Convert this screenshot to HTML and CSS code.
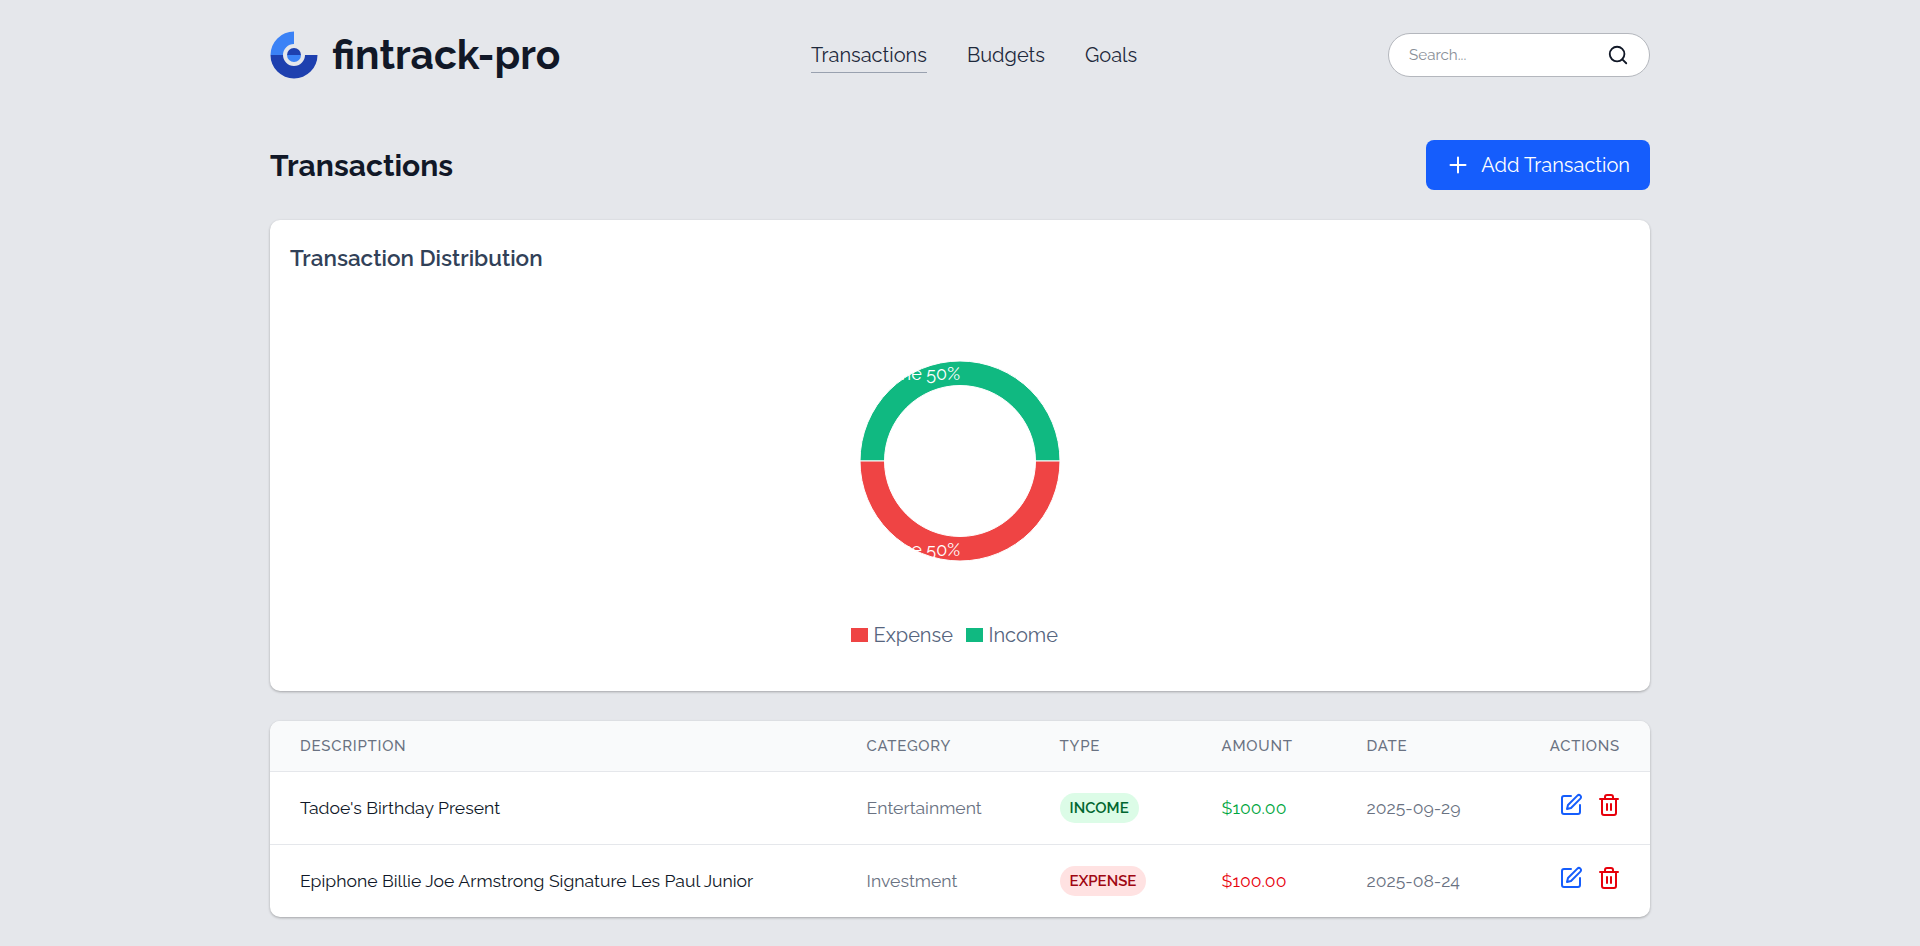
FILE: index.html
```html
<!DOCTYPE html>
<html lang="en">
<head>
    <meta charset="UTF-8">
    <meta name="viewport" content="width=device-width, initial-scale=1.0">
    <title>fintrack-pro</title>
    <link rel="stylesheet" href="styles.css">
</head>
<body>
    <div class="container">
        <header class="topbar">
            <a class="brand" href="#">
                <svg class="brand-logo" viewBox="0 0 48 48" width="48" height="48">
                    <path d="M24 .5A23.500 23.500 0 0 0 .5 24H13A11 11 0 0 1 24 13Z" fill="#3b82f6"/>
                    <path d="M.5 24A23.500 23.500 0 0 0 47.500 24H35A11 11 0 0 1 13 24Z" fill="#1e40af"/>
                    <path d="M17 24A7 7 0 0 1 31 24Z" fill="#1e40af"/>
                    <path d="M17 24A7 7 0 0 0 31 24Z" fill="#3b82f6"/>
                </svg>
                <span class="brand-name">fintrack-pro</span>
            </a>
            <nav class="nav">
                <a class="nav-link active" href="#">Transactions</a>
                <a class="nav-link" href="#">Budgets</a>
                <a class="nav-link" href="#">Goals</a>
            </nav>
            <div class="search">
                <span class="search-hint">Search...</span>
                <svg class="search-icon" viewBox="0 0 24 24" width="22" height="22" fill="none" stroke="#111827" stroke-width="2" stroke-linecap="round">
                    <circle cx="11" cy="11" r="8"/>
                    <path d="M21 21l-4.300-4.300"/>
                </svg>
            </div>
        </header>

        <div class="page-head">
            <h1>Transactions</h1>
            <button class="add-btn" type="button">
                <svg viewBox="0 0 24 24" width="24" height="24" fill="none" stroke="#fff" stroke-width="2" stroke-linecap="round">
                    <path d="M12 4.500v15M4.500 12h15"/>
                </svg>
                Add Transaction
            </button>
        </div>

        <section class="card chart-card">
            <h2>Transaction Distribution</h2>
            <div class="donut-wrap">
                <svg class="donut" viewBox="0 0 200 200" width="200" height="200">
                    <path d="M0 100A100 100 0 0 1 200 100H175.500A75.500 75.500 0 0 0 24.500 100Z" fill="#10b981" stroke="#fff"/>
                    <path d="M0 100A100 100 0 0 0 200 100H175.500A75.500 75.500 0 0 1 24.500 100Z" fill="#ef4444" stroke="#fff"/>
                    <text class="donut-label" x="100" y="19" text-anchor="end">Income 50%</text>
                    <text class="donut-label" x="100" y="195" text-anchor="end">Expense 50%</text>
                </svg>
            </div>
            <div class="legend">
                <span class="legend-item"><i class="swatch swatch-red"></i>Expense</span>
                <span class="legend-item"><i class="swatch swatch-green"></i>Income</span>
            </div>
        </section>

        <section class="card table-card">
            <table>
                <thead>
                    <tr>
                        <th class="col-desc">Description</th>
                        <th class="col-cat">Category</th>
                        <th class="col-type">Type</th>
                        <th class="col-amt">Amount</th>
                        <th class="col-date">Date</th>
                        <th class="col-act">Actions</th>
                    </tr>
                </thead>
                <tbody>
                    <tr>
                        <td class="desc">Tadoe's Birthday Present</td>
                        <td class="muted">Entertainment</td>
                        <td><span class="badge badge-income">INCOME</span></td>
                        <td class="amt-income">$100.00</td>
                        <td class="muted">2025-09-29</td>
                        <td class="actions">
                            <svg viewBox="0 0 24 24" width="24" height="24" fill="none" stroke="#155dfc" stroke-width="2" stroke-linecap="round" stroke-linejoin="round"><path d="M12 3H5a2 2 0 0 0-2 2v14a2 2 0 0 0 2 2h14a2 2 0 0 0 2-2v-7"/><path d="M18.400 2.600a2.100 2.100 0 0 1 3 3L12 15l-4 1 1-4Z"/></svg>
                            <svg viewBox="0 0 24 24" width="24" height="24" fill="none" stroke="#e7000b" stroke-width="2" stroke-linecap="round" stroke-linejoin="round"><path d="M3 6h18M19 6v14a2 2 0 0 1-2 2H7a2 2 0 0 1-2-2V6M8 6V4a2 2 0 0 1 2-2h4a2 2 0 0 1 2 2v2M10 11v6M14 11v6"/></svg>
                        </td>
                    </tr>
                    <tr>
                        <td class="desc">Epiphone Billie Joe Armstrong Signature Les Paul Junior</td>
                        <td class="muted">Investment</td>
                        <td><span class="badge badge-expense">EXPENSE</span></td>
                        <td class="amt-expense">$100.00</td>
                        <td class="muted">2025-08-24</td>
                        <td class="actions">
                            <svg viewBox="0 0 24 24" width="24" height="24" fill="none" stroke="#155dfc" stroke-width="2" stroke-linecap="round" stroke-linejoin="round"><path d="M12 3H5a2 2 0 0 0-2 2v14a2 2 0 0 0 2 2h14a2 2 0 0 0 2-2v-7"/><path d="M18.400 2.600a2.100 2.100 0 0 1 3 3L12 15l-4 1 1-4Z"/></svg>
                            <svg viewBox="0 0 24 24" width="24" height="24" fill="none" stroke="#e7000b" stroke-width="2" stroke-linecap="round" stroke-linejoin="round"><path d="M3 6h18M19 6v14a2 2 0 0 1-2 2H7a2 2 0 0 1-2-2V6M8 6V4a2 2 0 0 1 2-2h4a2 2 0 0 1 2 2v2M10 11v6M14 11v6"/></svg>
                        </td>
                    </tr>
                </tbody>
            </table>
        </section>
    </div>
</body>
</html>
```

FILE: styles.css
```css
* {
    box-sizing: border-box;
}

body {
    font-family: Raleway, "Open Sans", sans-serif;
    margin: 0;
    background-color: #e5e7eb;
    color: #111827;
}

.container {
    width: 1380px;
    margin: 0 auto;
    padding-bottom: 29px;
}

.topbar {
    display: flex;
    justify-content: space-between;
    align-items: center;
    height: 110px;
}

.brand {
    display: flex;
    align-items: center;
    gap: 14px;
    color: #111827;
    text-decoration: none;
}

.brand-name {
    font-size: 40.6px;
    font-weight: 700;
    line-height: 1;
}

.nav {
    display: flex;
    gap: 40px;
}

.nav-link {
    font-size: 20px;
    line-height: 28px;
    color: #1e293b;
    text-decoration: none;
    padding: 4px 0 3px;
    border-bottom: 1px solid transparent;
}

.nav-link.active {
    border-bottom-color: #99a1af;
}

.search {
    width: 262px;
    height: 44px;
    padding: 0 20px;
    display: flex;
    align-items: center;
    justify-content: space-between;
    background: white;
    border: 1px solid #b4b7bd;
    border-radius: 22px;
}

.search-hint {
    font-size: 15.2px;
    color: #8a8f98;
}

.page-head {
    display: flex;
    justify-content: space-between;
    align-items: center;
    height: 50px;
    margin-top: 30px;
}

h1 {
    margin: 0;
    font-size: 30px;
    font-weight: 700;
}

.add-btn {
    display: flex;
    align-items: center;
    gap: 11px;
    height: 50px;
    padding: 0 20px;
    background-color: #155dfc;
    color: white;
    border: none;
    border-radius: 8px;
    font: inherit;
    font-size: 20px;
}

.card {
    background: white;
    border-radius: 10px;
    box-shadow: 0 1px 3px rgba(0, 0, 0, 0.2), 0 1px 2px rgba(0, 0, 0, 0.1);
}

.chart-card {
    height: 471px;
    margin-top: 30px;
    padding: 20px;
}

h2 {
    margin: 0;
    font-size: 22.5px;
    line-height: 36px;
    font-weight: 600;
    color: #314158;
}

.donut-wrap {
    display: flex;
    justify-content: center;
    margin-top: 85px;
}

.donut {
    overflow: visible;
}

.donut-label {
    font-size: 18px;
    fill: white;
}

.legend {
    display: flex;
    justify-content: center;
    gap: 13px;
    margin-top: 62px;
    padding-right: 11px;
    font-size: 20px;
    color: #56657e;
}

.legend-item {
    display: flex;
    align-items: center;
    gap: 5.5px;
}

.swatch {
    width: 17px;
    height: 14px;
}

.swatch-red {
    background: #ef4444;
}

.swatch-green {
    background: #10b981;
}

.table-card {
    margin-top: 30px;
    overflow: hidden;
}

table {
    width: 100%;
    border-collapse: collapse;
    table-layout: fixed;
}

th {
    height: 50px;
    padding: 0 0 0 30px;
    background: #f9fafb;
    border-bottom: 1px solid #e5e7eb;
    text-align: left;
    font-size: 15px;
    font-weight: 500;
    letter-spacing: 0.75px;
    text-transform: uppercase;
    color: #6a7282;
}

td {
    height: 73px;
    padding: 0 0 0 30px;
    font-size: 17.6px;
    border-bottom: 1px solid #e5e7eb;
}

tbody tr:last-child td {
    border-bottom: none;
}

.col-desc { width: 566.6px; }
.col-cat { width: 193px; }
.col-type { width: 162px; }
.col-amt { width: 145px; }
.col-date { width: 170px; }

.col-act {
    padding: 0 30px 0 0;
    text-align: right;
}

.desc {
    color: #101828;
}

.muted {
    color: #6a7282;
}

.badge {
    display: inline-block;
    padding: 0 10px;
    height: 30px;
    line-height: 30px;
    border-radius: 15px;
    font-size: 15px;
    font-weight: 600;
}

.badge-income {
    background: #dcfce7;
    color: #016630;
}

.badge-expense {
    background: #ffe2e2;
    color: #9f0712;
}

.amt-income {
    color: #00a63e;
}

.amt-expense {
    color: #e7000b;
}

.actions {
    padding: 0 29px 6px 0;
    text-align: right;
}

.actions svg {
    margin-left: 10px;
    vertical-align: middle;
}
```
